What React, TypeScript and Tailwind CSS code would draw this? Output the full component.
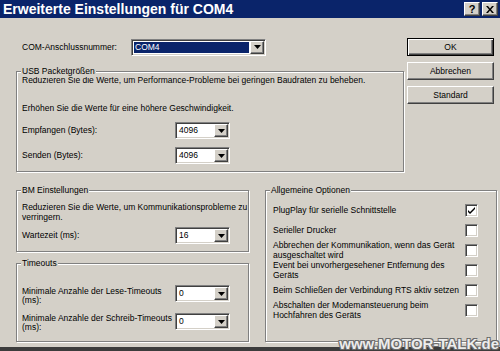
import React from "react";

const raised =
  "border border-t-white border-l-white border-r-[#404040] border-b-[#404040] shadow-[inset_-1px_-1px_0_#808080]";
const sunken =
  "border border-t-[#808080] border-l-[#808080] border-b-white border-r-white shadow-[inset_1px_1px_0_#404040,inset_-1px_-1px_0_#d4d0c8]";

const Arrow = () => (
  <div className={`w-[14px] h-full bg-[#d4d0c8] flex items-center justify-center ${raised}`}>
    <svg width="7" height="4" viewBox="0 0 7 4">
      <polygon points="0,0 7,0 3.5,4" fill="#000" />
    </svg>
  </div>
);

const Dropdown = ({ value, width, selected }: { value: string; width: string; selected?: boolean }) => (
  <div className={`flex h-[17px] bg-white p-[1px] ${width} ${sunken}`}>
    <div className="flex-1 flex items-stretch p-[1px]">
      {selected ? (
        <span className="flex-1 flex items-center bg-[#0a246a] text-white pl-[1px]">{value}</span>
      ) : (
        <span className="flex-1 flex items-center pl-[1px]">{value}</span>
      )}
    </div>
    <Arrow />
  </div>
);

const Button = ({ label, primary }: { label: string; primary?: boolean }) =>
  primary ? (
    <button className="h-[18px] w-full bg-[#d4d0c8] border border-black shadow-[inset_1px_1px_0_white,inset_-1px_-1px_0_#404040,inset_-2px_-2px_0_#808080]">
      {label}
    </button>
  ) : (
    <button className={`h-[18px] w-full bg-[#d4d0c8] ${raised}`}>{label}</button>
  );

const Group = ({ title, className, children }: { title: string; className: string; children: React.ReactNode }) => (
  <div className={`relative border border-[#808080] shadow-[inset_1px_1px_0_white,1px_1px_0_white] ${className}`}>
    <span className="absolute left-[4px] -top-[6px] bg-[#d4d0c8] px-[1px] leading-[11px]">{title}</span>
    {children}
  </div>
);

const Checkbox = ({ checked }: { checked?: boolean }) => (
  <div className={`w-[13px] h-[13px] bg-white flex items-center justify-center shrink-0 ${sunken}`}>
    {checked && (
      <svg width="7" height="7" viewBox="0 0 7 7">
        <path d="M0 3 L2 5 L7 0 L7 2 L2 7 L0 5 Z" fill="#000" />
      </svg>
    )}
  </div>
);

const options: { text: React.ReactNode; checked?: boolean }[] = [
  { text: "PlugPlay für serielle Schnittstelle", checked: true },
  { text: "Serieller Drucker" },
  { text: <>Abbrechen der Kommunikation, wenn das Gerät<br />ausgeschaltet wird</> },
  { text: <>Event bei unvorhergesehener Entfernung des<br />Geräts</> },
  { text: "Beim Schließen der Verbindung RTS aktiv setzen" },
  { text: <>Abschalten der Modemansteuerung beim<br />Hochfahren des Geräts</> },
];

export default function App() {
  return (
    <div className="relative w-[500px] h-[351px] overflow-hidden bg-[#d4d0c8] flex flex-col text-[8.5px] text-black font-['Liberation_Sans',Arial,sans-serif] leading-[11px]">
      {/* title bar */}
      <div className="h-[18px] shrink-0 bg-[#0a246a] flex items-center pl-[3px] pr-[2px]">
        <span className="text-white font-bold text-[14px] leading-[18px]">Erweiterte Einstellungen für COM4</span>
        <div className="ml-auto flex gap-[2px]">
          <div className={`w-[16px] h-[14px] bg-[#d4d0c8] flex items-center justify-center font-bold text-[11px] ${raised}`}>?</div>
          <div className={`w-[16px] h-[14px] bg-[#d4d0c8] flex items-center justify-center ${raised}`}>
            <svg width="8" height="7" viewBox="0 0 8 7">
              <path d="M0 0 H2 L4 2.5 L6 0 H8 L5 3.5 L8 7 H6 L4 4.5 L2 7 H0 L3 3.5 Z" fill="#000" />
            </svg>
          </div>
        </div>
      </div>

      {/* top section */}
      <div className="flex">
        <div className="ml-[16px] w-[388px]">
          <div className="flex items-center h-[18px] mt-[20px] pl-[6px]">
            <span className="w-[109px]">COM-Anschlussnummer:</span>
            <Dropdown value="COM4" width="w-[135px]" selected />
          </div>
          <Group title="USB Packetgrößen" className="mt-[15px] h-[101px] pt-[3px] pl-[5px]">
            <p>Reduzieren Sie die Werte, um Performance-Probleme bei geringen Baudraten zu beheben.</p>
            <p className="mt-[17px]">Erhöhen Sie die Werte für eine höhere Geschwindigkeit.</p>
            <div className="flex items-center mt-[8px]">
              <span className="w-[153px]">Empfangen (Bytes):</span>
              <Dropdown value="4096" width="w-[55px]" />
            </div>
            <div className="flex items-center mt-[8px]">
              <span className="w-[153px]">Senden (Bytes):</span>
              <Dropdown value="4096" width="w-[55px]" />
            </div>
          </Group>
        </div>
        <div className="ml-[3px] w-[87px] mt-[20px] flex flex-col gap-[6px]">
          <Button label="OK" primary />
          <Button label="Abbrechen" />
          <Button label="Standard" />
        </div>
      </div>

      {/* bottom section */}
      <div className="flex mt-[18px] ml-[16px]">
        <div className="w-[233px] flex flex-col">
          <Group title="BM Einstellungen" className="h-[62px] pt-[11px] pl-[5px]">
            <p className="leading-[10px]">
              Reduzieren Sie die Werte, um Kommunikationsprobleme zu
              <br />
              verringern.
            </p>
            <div className="flex items-center mt-[5px]">
              <span className="w-[153px]">Wartezeit (ms):</span>
              <Dropdown value="16" width="w-[55px]" />
            </div>
          </Group>
          <Group title="Timeouts" className="mt-[11px] h-[79px] pt-[21px] pl-[5px]">
            <div className="flex items-start">
              <span className="w-[153px] leading-[9px] pt-[2px]">
                Minimale Anzahle der Lese-Timeouts
                <br />
                (ms):
              </span>
              <Dropdown value="0" width="w-[55px]" />
            </div>
            <div className="flex items-start mt-[8px]">
              <span className="w-[153px] leading-[9px] pt-[1px]">
                Minimale Anzahle der Schreib-Timeouts
                <br />
                (ms):
              </span>
              <Dropdown value="0" width="w-[55px]" />
            </div>
          </Group>
        </div>
        <Group title="Allgemeine Optionen" className="ml-[16px] w-[232px] h-[152px] pt-[9px] pl-[7px] pr-[18px]">
          {options.map((o, i) => (
            <div key={i} className="h-[20px] flex items-center justify-between">
              <span className="leading-[10px]">{o.text}</span>
              <Checkbox checked={o.checked} />
            </div>
          ))}
        </Group>
      </div>

      <div className="mt-auto h-[4px] bg-[#3c3c3c] shrink-0" />

      <span className="absolute right-[1px] bottom-[-2px] font-bold text-[15px] leading-[18px] text-[#ececec] [text-shadow:1px_1px_0_#6a6a6a,-1px_-1px_0_#6a6a6a,1px_-1px_0_#6a6a6a,-1px_1px_0_#6a6a6a]">
        www.MOTOR-TALK.de
      </span>
    </div>
  );
}
